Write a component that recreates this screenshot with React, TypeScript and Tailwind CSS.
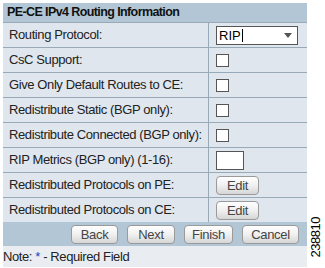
import { ReactNode } from 'react'

const rows: { label: string; kind: 'select' | 'check' | 'text' | 'edit' }[] = [
  { label: 'Routing Protocol:', kind: 'select' },
  { label: 'CsC Support:', kind: 'check' },
  { label: 'Give Only Default Routes to CE:', kind: 'check' },
  { label: 'Redistribute Static (BGP only):', kind: 'check' },
  { label: 'Redistribute Connected (BGP only):', kind: 'check' },
  { label: 'RIP Metrics (BGP only) (1-16):', kind: 'text' },
  { label: 'Redistributed Protocols on PE:', kind: 'edit' },
  { label: 'Redistributed Protocols on CE:', kind: 'edit' },
]

function GelButton({ children, className }: { children: ReactNode; className: string }) {
  return (
    <button
      className={`h-[19px] rounded-[4px] border border-[#9a9a9a] bg-gradient-to-b from-[#ffffff] via-[#f0f0f0] to-[#d6d6d6] text-[13px] leading-none tracking-[-0.3px] text-[#444] ${className}`}
    >
      {children}
    </button>
  )
}

function Control({ kind }: { kind: string }) {
  if (kind === 'select') {
    return (
      <div className="flex h-[19px] w-[82px] items-center justify-between border border-[#555] bg-white pl-[2px] pr-[5px]">
        <span className="flex items-center text-[13px] leading-none text-black">
          RIP<span className="ml-px h-[13px] w-px bg-black" />
        </span>
        <span className="h-0 w-0 border-x-[4px] border-t-[5px] border-x-transparent border-t-[#555]" />
      </div>
    )
  }
  if (kind === 'check') {
    return <div className="h-[13px] w-[13px] border border-[#555] bg-white" />
  }
  if (kind === 'text') {
    return <div className="h-[19px] w-[28px] border border-[#555] bg-white" />
  }
  return <GelButton className="w-[43px]">Edit</GelButton>
}

function App() {
  return (
    <div className="relative h-[268px] w-[325px] bg-white pl-[3px] pt-[3px] font-['Liberation_Sans',Arial,sans-serif]">
      <div className="w-[304px] bg-[#e9edf2]">
        <div className="flex h-[19px] items-center whitespace-nowrap bg-[#b3c6d5] pl-[4px] text-[12.5px] font-bold tracking-[-0.6px] text-[#111]">
          PE-CE IPv4 Routing Information
        </div>
        {rows.map(r => (
          <div key={r.label} className="flex h-[25px] border-t border-[#98a9b8] bg-[#dfe6ee]">
            <div className="flex w-[206px] items-center whitespace-nowrap border-r border-[#98a9b8] pl-[6px] text-[13px] tracking-[-0.4px] text-[#222]">
              {r.label}
            </div>
            <div className="flex flex-1 items-center pl-[7px]">
              <Control kind={r.kind} />
            </div>
          </div>
        ))}
        <div className="flex h-[24px] items-center justify-end gap-[9px] bg-[#b3c6d5] pr-[8px]">
          <GelButton className="w-[47px]">Back</GelButton>
          <GelButton className="w-[48px]">Next</GelButton>
          <GelButton className="w-[49px]">Finish</GelButton>
          <GelButton className="w-[57px]">Cancel</GelButton>
        </div>
        <div className="flex h-[21px] items-center whitespace-nowrap text-[13px] tracking-[-0.4px] text-[#222]">
          Note:&nbsp;<span className="text-[#1f3fbf]">*</span>&nbsp;- Required Field
        </div>
      </div>
      <div className="absolute bottom-[11px] right-[3px] rotate-180 text-[13px] leading-none tracking-[-0.5px] text-black [writing-mode:vertical-rl]">
        238810
      </div>
    </div>
  )
}

export default App
